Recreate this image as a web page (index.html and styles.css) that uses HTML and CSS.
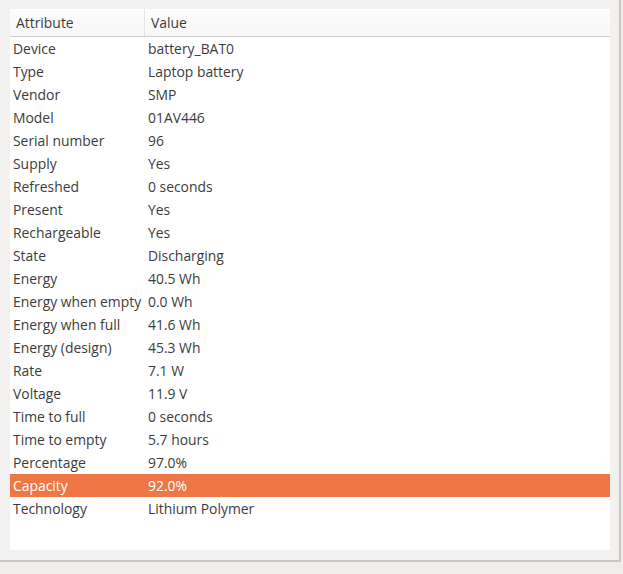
FILE: index.html
```html
<!DOCTYPE html>
<html>
<head>
<meta charset="utf-8">
<link rel="stylesheet" href="styles.css">
</head>
<body>
<div class="frame">
  <div class="pane">
    <div class="table">
      <div class="header">
        <div class="hcell attr">Attribute</div>
        <div class="hcell val">Value</div>
      </div>
      <div class="rows">
        <div class="row"><span class="k">Device</span><span class="v">battery_BAT0</span></div>
        <div class="row"><span class="k">Type</span><span class="v">Laptop battery</span></div>
        <div class="row"><span class="k">Vendor</span><span class="v">SMP</span></div>
        <div class="row"><span class="k">Model</span><span class="v">01AV446</span></div>
        <div class="row"><span class="k">Serial number</span><span class="v">96</span></div>
        <div class="row"><span class="k">Supply</span><span class="v">Yes</span></div>
        <div class="row"><span class="k">Refreshed</span><span class="v">0 seconds</span></div>
        <div class="row"><span class="k">Present</span><span class="v">Yes</span></div>
        <div class="row"><span class="k">Rechargeable</span><span class="v">Yes</span></div>
        <div class="row"><span class="k">State</span><span class="v">Discharging</span></div>
        <div class="row"><span class="k">Energy</span><span class="v">40.5 Wh</span></div>
        <div class="row"><span class="k">Energy when empty</span><span class="v">0.0 Wh</span></div>
        <div class="row"><span class="k">Energy when full</span><span class="v">41.6 Wh</span></div>
        <div class="row"><span class="k">Energy (design)</span><span class="v">45.3 Wh</span></div>
        <div class="row"><span class="k">Rate</span><span class="v">7.1 W</span></div>
        <div class="row"><span class="k">Voltage</span><span class="v">11.9 V</span></div>
        <div class="row"><span class="k">Time to full</span><span class="v">0 seconds</span></div>
        <div class="row"><span class="k">Time to empty</span><span class="v">5.7 hours</span></div>
        <div class="row"><span class="k">Percentage</span><span class="v">97.0%</span></div>
        <div class="row selected"><span class="k">Capacity</span><span class="v">92.0%</span></div>
        <div class="row"><span class="k">Technology</span><span class="v">Lithium Polymer</span></div>
      </div>
    </div>
  </div>
</div>
</body>
</html>
```
FILE: styles.css
```css
html, body {
  margin: 0;
  padding: 0;
  background: #efeeed;
}
body {
  width: 623px;
  height: 574px;
  overflow: hidden;
  font-family: "Open Sans", "DejaVu Sans", sans-serif;
  font-size: 13.9px;
  color: #3c3c3c;
}
.frame {
  width: 621px;
  height: 562px;
  box-sizing: border-box;
  background: #f2f1f0;
  border-right: 2px solid #c8c7c6;
  border-bottom: 2px solid #c8c7c6;
  padding: 9px 11px 11px 10px;
}
.pane {
  width: 600px;
  height: 541px;
  background: #ffffff;
}
.header {
  display: flex;
  height: 27px;
  background: linear-gradient(#fdfdfd, #f7f7f7);
  border-bottom: 1px solid #cfcfcf;
  box-sizing: content-box;
}
.hcell {
  display: flex;
  align-items: center;
  height: 26px;
  padding-bottom: 1px;
}
.hcell.attr {
  width: 128px;
  padding-left: 6px;
  border-right: 1px solid #e4e4e4;
}
.hcell.val {
  padding-left: 6px;
}
.row {
  display: flex;
  align-items: center;
  height: 22px;
  padding-bottom: 1px;
}
.row .k {
  width: 135px;
  padding-left: 3px;
  white-space: nowrap;
}
.row .v {
  white-space: nowrap;
}
.row.selected {
  background: #ef7746;
  color: #ffffff;
}
```
